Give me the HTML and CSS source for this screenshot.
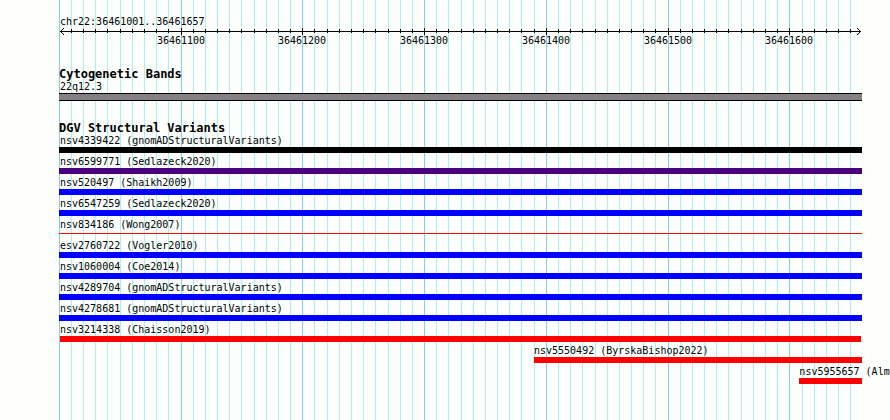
FILE: index.html
```html
<!DOCTYPE html>
<html lang="en">
<head>
<meta charset="utf-8">
<title>chr22:36461001..36461657</title>
<link rel="stylesheet" href="styles.css">
</head>
<body>
<main class="browser">
  <svg class="grid" id="grid" aria-hidden="true"></svg>
  <section class="ruler">
    <p class="label">chr22:36461001..36461657</p>
    <svg class="axis" id="axis" aria-hidden="true"></svg>
    <div class="ticks" id="ticks"></div>
  </section>
  <section class="track">
    <h2>Cytogenetic Bands</h2>
    <p class="label">22q12.3</p>
    <div class="band"></div>
  </section>
  <section class="track">
    <h2>DGV Structural Variants</h2>
    <div class="variant"><p class="label">nsv4339422 (gnomADStructuralVariants)</p><div class="bar black"></div></div>
    <div class="variant"><p class="label">nsv6599771 (Sedlazeck2020)</p><div class="bar purple"></div></div>
    <div class="variant"><p class="label">nsv520497 (Shaikh2009)</p><div class="bar blue"></div></div>
    <div class="variant"><p class="label">nsv6547259 (Sedlazeck2020)</p><div class="bar blue"></div></div>
    <div class="variant"><p class="label">nsv834186 (Wong2007)</p><div class="bar thin"></div></div>
    <div class="variant"><p class="label">esv2760722 (Vogler2010)</p><div class="bar blue"></div></div>
    <div class="variant"><p class="label">nsv1060004 (Coe2014)</p><div class="bar blue"></div></div>
    <div class="variant"><p class="label">nsv4289704 (gnomADStructuralVariants)</p><div class="bar blue"></div></div>
    <div class="variant"><p class="label">nsv4278681 (gnomADStructuralVariants)</p><div class="bar blue"></div></div>
    <div class="variant"><p class="label">nsv3214338 (Chaisson2019)</p><div class="bar red inset"></div></div>
    <div class="variant" style="margin-left:59.15%"><p class="label flush">nsv5550492 (ByrskaBishop2022)</p><div class="bar red"></div></div>
    <div class="variant" style="margin-left:92.2%"><p class="label flush">nsv5955657 (Alm</p><div class="bar red"></div></div>
  </section>
</main>
<script src="ruler.js"></script>
</body>
</html>
```
FILE: styles.css
```css
* {
  box-sizing: border-box;
}

body {
  margin: 0;
  background: #fdfffc;
  color: #000;
  font-family: "DejaVu Sans Mono", monospace;
  font-size: 10px;
  line-height: 12px;
  overflow: hidden;
}

.browser {
  position: relative;
  display: flex;
  flex-direction: column;
  gap: 21px;
  min-height: 100vh;
  padding: 16px 28px 0 59px;
}

.grid {
  position: absolute;
  top: 0;
  left: 59px;
  width: calc(100% - 87px);
  height: 100%;
  z-index: -1;
}

.major {
  fill: #87ceeb;
}

.minor {
  fill: #afeeee;
}

h2 {
  margin: 0 0 1px;
  font-size: 12px;
  line-height: 12px;
}

.label {
  margin: 0;
  padding-left: 1px;
  white-space: nowrap;
}

.flush {
  padding-left: 0;
}

.axis {
  display: block;
  width: 100%;
  height: 7px;
}

.arrow {
  fill: none;
  stroke: #000;
}

.ticks {
  position: relative;
  height: 12px;
}

.ticks span {
  position: absolute;
  transform: translateX(-50%);
}

.band {
  height: 8px;
  background: #848084;
  border: solid #000;
  border-width: 1px 0;
}

.variant {
  margin-bottom: 3px;
}

.bar {
  height: 6px;
}

.black {
  background: #000;
}

.purple {
  background: #4b0082;
}

.blue {
  background: #00f;
}

.red {
  background: #f00;
}

.inset {
  margin: 0 1px;
}

.thin {
  height: 1px;
  margin: 2px 0 6px;
  background: #f00;
}
```
FILE: ruler.js
```js
const START = 36461000;
const LENGTH = 657;
const NS = "http://www.w3.org/2000/svg";
const grid = document.getElementById("grid");
const axis = document.getElementById("axis");
const ticks = document.getElementById("ticks");

function rect(parent, x, y, width, height, name) {
  const el = document.createElementNS(NS, "rect");
  el.setAttribute("x", x);
  el.setAttribute("y", y);
  el.setAttribute("width", width);
  el.setAttribute("height", height);
  if (name) el.setAttribute("class", name);
  parent.append(el);
}

function arrow(d) {
  const el = document.createElementNS(NS, "path");
  el.setAttribute("d", d);
  el.setAttribute("class", "arrow");
  axis.append(el);
}

function draw() {
  grid.replaceChildren();
  axis.replaceChildren();
  ticks.replaceChildren();
  const width = Math.round(axis.getBoundingClientRect().width);
  const scale = (width - 3) / LENGTH;
  for (let bp = 0; bp <= LENGTH; bp += 10) {
    const x = Math.floor(bp * scale + 0.25);
    const major = bp % 100 === 0;
    rect(grid, x, 0, 1, "100%", major ? "major" : "minor");
    if (bp === 0) continue;
    rect(axis, x, major ? 0 : 1, 1, major ? 7 : 4);
    if (major) {
      const text = document.createElement("span");
      text.textContent = START + bp;
      text.style.left = x + "px";
      ticks.append(text);
    }
  }
  rect(axis, 1, 3, width - 2, 1);
  arrow("M5 0 L1.5 3.5 L5 7");
  arrow(`M${width - 5} 0 L${width - 1.5} 3.5 L${width - 5} 7`);
}

draw();
window.addEventListener("resize", draw);
```
